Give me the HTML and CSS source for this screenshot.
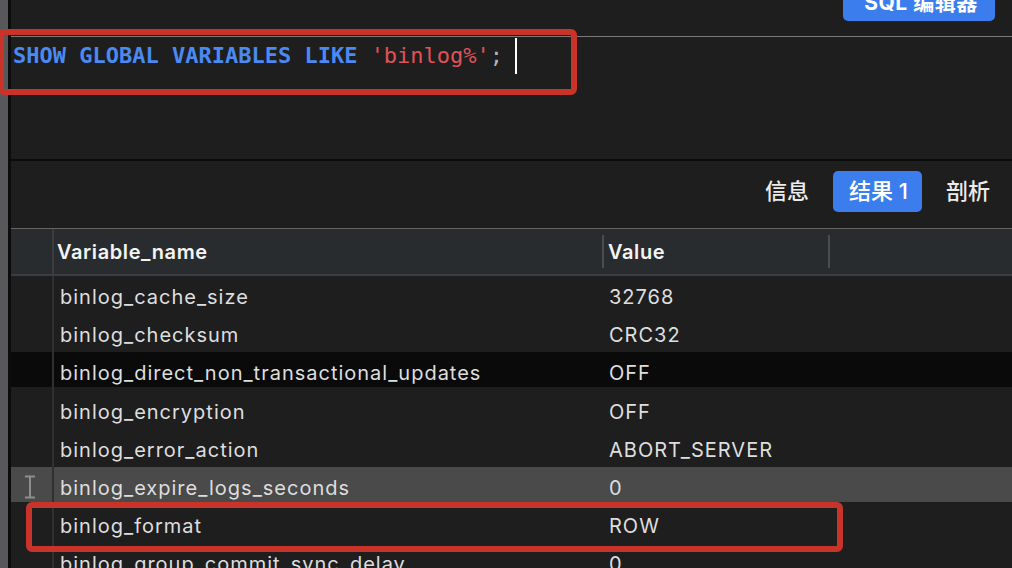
FILE: index.html
```html
<!DOCTYPE html>
<html lang="zh">
<head>
<meta charset="utf-8">
<title>SQL 编辑器</title>
<link rel="stylesheet" href="styles.css">
</head>
<body>
<div class="app">
  <div class="rail"></div>
  <div class="main">
    <div class="topbar">
      <div class="sql-btn"><span>SQL 编辑器</span></div>
    </div>
    <div class="editor">
      <div class="code"><span class="kw">SHOW GLOBAL VARIABLES LIKE</span> <span class="str">'binlog%'</span><span class="punct">;</span><span class="caret"></span></div>
    </div>
    <div class="results">
      <div class="tabs">
        <div class="tab">信息</div>
        <div class="tab active">结果 1</div>
        <div class="tab">剖析</div>
      </div>
      <div class="grid">
        <div class="thead">
          <div class="hc hnum"></div>
          <div class="hc hname">Variable_name</div>
          <div class="hc hval">Value</div>
          <div class="hc hrest"></div>
        </div>
        <div class="row"><div class="num"></div><div class="name">binlog_cache_size</div><div class="val">32768</div><div></div></div>
        <div class="row"><div class="num"></div><div class="name">binlog_checksum</div><div class="val">CRC32</div><div></div></div>
        <div class="row dark"><div class="num"></div><div class="name">binlog_direct_non_transactional_updates</div><div class="val">OFF</div><div></div></div>
        <div class="row"><div class="num"></div><div class="name">binlog_encryption</div><div class="val">OFF</div><div></div></div>
        <div class="row"><div class="num"></div><div class="name">binlog_error_action</div><div class="val">ABORT_SERVER</div><div></div></div>
        <div class="row hover"><div class="num"><svg class="ibeam" width="12" height="24" viewBox="0 0 12 24"><path d="M1 1.5h10M6 1.5v21M1 22.5h10" stroke="#8e8e8e" stroke-width="2" fill="none"/></svg></div><div class="name">binlog_expire_logs_seconds</div><div class="val">0</div><div></div></div>
        <div class="row"><div class="num"></div><div class="name">binlog_format</div><div class="val">ROW</div><div></div></div>
        <div class="row"><div class="num"></div><div class="name">binlog_group_commit_sync_delay</div><div class="val">0</div><div></div></div>
      </div>
    </div>
  </div>
  <div class="mark mark-sql"></div>
  <div class="mark mark-row"></div>
</div>
</body>
</html>
```

FILE: styles.css
```css
* { box-sizing: border-box; }
html, body { margin: 0; padding: 0; }
body {
  width: 1012px;
  height: 568px;
  overflow: hidden;
  background: #1e1e1e;
  font-family: Inter, "Noto Sans CJK SC", sans-serif;
  color: #e0e0e0;
}
.app {
  position: relative;
  display: flex;
  width: 1012px;
  height: 568px;
  overflow: hidden;
}
.rail {
  width: 11px;
  flex: none;
  background: #58585a;
  border-right: 3px solid #0c0c0c;
}
.main {
  flex: 1;
  display: flex;
  flex-direction: column;
  min-width: 0;
}
.topbar {
  height: 37px;
  flex: none;
  display: flex;
  justify-content: flex-end;
  align-items: flex-start;
  padding-right: 17px;
  border-bottom: 1px solid #7c7c7c;
}
.sql-btn {
  width: 152px;
  height: 21px;
  background: #3b7ded;
  border-radius: 0 0 5px 5px;
  display: flex;
  justify-content: center;
  align-items: flex-end;
  padding: 0 0 8px 4px;
  overflow: hidden;
  color: #fff;
  font-family: Inter, "Noto Sans CJK SC", sans-serif;
  font-weight: 700;
  font-size: 21px;
  line-height: 21px;
  letter-spacing: 0.5px;
}
.sql-btn span { white-space: nowrap; }
.editor {
  height: 124px;
  flex: none;
  padding: 1px 0 0 2px;
  border-bottom: 2px solid #0b0b0b;
}
.code {
  font-family: "DejaVu Sans Mono", monospace;
  font-size: 22px;
  line-height: 36px;
  white-space: pre;
}
.kw { color: #4a8af2; font-weight: 700; }
.str { color: #e0525a; }
.punct { color: #b4b4b4; }
.caret {
  display: inline-block;
  vertical-align: top;
  width: 2px;
  height: 36px;
  background: #ffffff;
  margin-left: 12px;
}
.results {
  flex: 1;
  display: flex;
  flex-direction: column;
}
.tabs {
  height: 67px;
  flex: none;
  display: flex;
  justify-content: flex-end;
  align-items: flex-start;
  gap: 24px;
  padding: 10px 22px 0 0;
}
.tab {
  height: 41px;
  line-height: 41px;
  font-size: 22px;
  font-family: Inter, "Noto Sans CJK SC", sans-serif;
  font-weight: 500;
  color: #ececec;
}
.tab.active {
  background: #3b7ded;
  color: #fff;
  border-radius: 5px;
  padding: 0 14px 0 16px;
}
.grid { display: flex; flex-direction: column; }
.thead, .row {
  display: grid;
  grid-template-columns: 43px 548px 226px 1fr;
}
.thead {
  height: 48px;
  background: #292c2f;
  border-top: 1px solid #646464;
  border-bottom: 2px solid #3b3e41;
}
.hc {
  display: flex;
  align-items: center;
  font-size: 20px;
  font-weight: 600;
  letter-spacing: 0.6px;
  color: #f4f4f4;
}
.hnum { border-right: 2px solid #3a3d40; }
.hname { padding-left: 3px; }
.hval::before, .hrest::before {
  content: "";
  width: 2px;
  height: 33px;
  background: #4a4d50;
  margin-right: 4px;
}
.row {
  height: 38.2px;
  font-size: 20px;
  letter-spacing: 1px;
  color: #dedede;
}
.row > div { line-height: 38px; padding-top: 2px; }
.row.dark { background: linear-gradient(#0a0a0a, #0a0a0a) top / 100% 35px no-repeat; }
.row.hover { background: linear-gradient(#4a4a4a, #4a4a4a) top / 100% 35px no-repeat; }
.row > .num {
  border-right: 2px solid #303030;
  display: flex;
  justify-content: center;
  align-items: flex-start;
  padding-top: 0;
}
.ibeam { margin-top: 8px; margin-left: -4px; }
.name { padding-left: 6px; white-space: nowrap; }
.val { padding-left: 7px; white-space: nowrap; }
.mark {
  position: absolute;
  border: 6px solid #c9342a;
  border-radius: 6px;
  pointer-events: none;
}
.mark-sql { left: -2px; top: 29px; width: 579px; height: 66px; }
.mark-row { left: 26px; top: 502px; width: 817px; height: 50px; }
```
